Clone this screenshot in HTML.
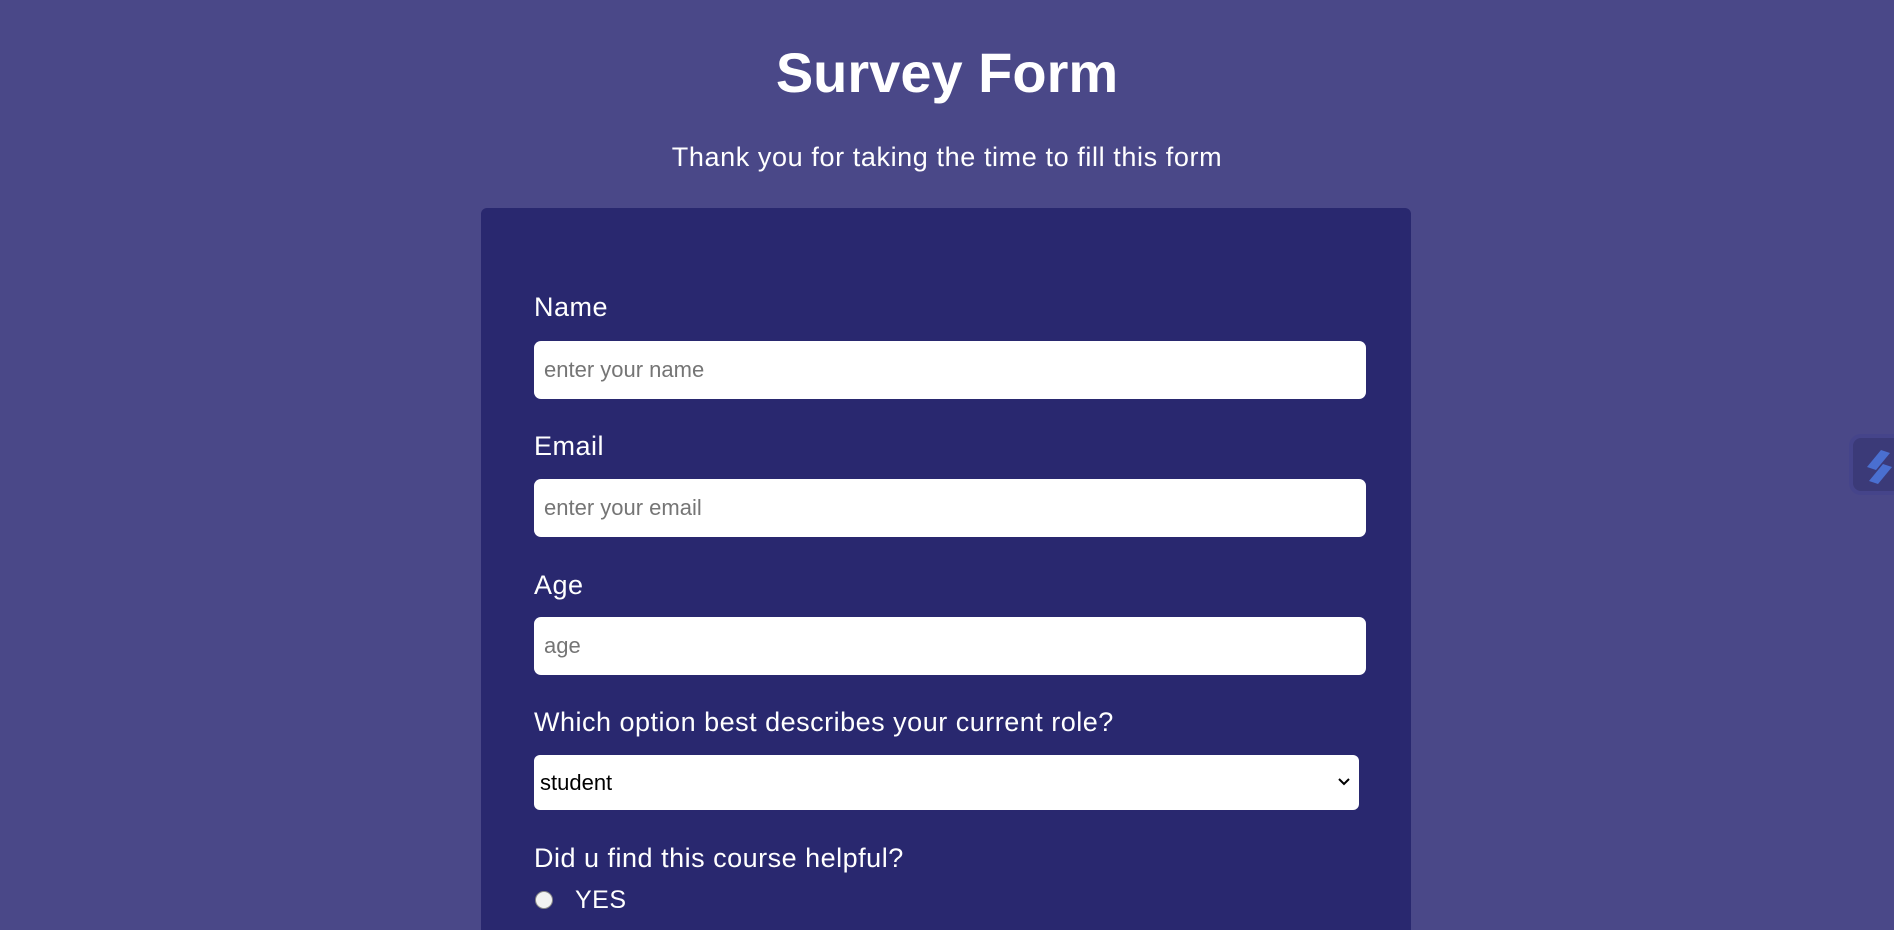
<!DOCTYPE html>
<html><head><meta charset="utf-8"><style>
*{margin:0;padding:0;box-sizing:border-box}
html,body{width:1894px;height:930px;overflow:hidden;background:#4a4888;font-family:"Comic Sans MS","Liberation Sans",sans-serif;color:#fff}
h1{position:absolute;left:0;width:1894px;text-align:center;top:38px;font-size:56px;font-weight:bold;line-height:70px}
.sub{position:absolute;left:0;width:1894px;text-align:center;top:141px;font-size:27px;letter-spacing:0.6px;line-height:32px}
.card{position:absolute;left:481px;top:208px;width:930px;height:722px;background:#29286f;border-radius:6px 6px 0 0}
.lbl{position:absolute;left:534px;font-size:27px;letter-spacing:0.5px;line-height:30px;white-space:nowrap}
.inp{position:absolute;left:534px;width:832px;height:58px;background:#fff;border-radius:7px;font-family:"Liberation Sans",Arial,sans-serif;font-size:22px;color:#757575;padding-left:10px;line-height:58px}
.sel{position:absolute;left:534px;width:825px;height:55px;background:#fff;border-radius:6px;font-family:"Liberation Sans",Arial,sans-serif;font-size:22px;color:#000;padding-left:6px;line-height:55px}
.radio{position:absolute;left:535px;top:891px;width:18px;height:18px;border-radius:50%;background:#f2f2f2;border:1px solid #888}
.widget{position:absolute;left:1849px;top:434px;width:62px;height:61px;border-radius:12px;background:#3b3a78;border:4px solid #45448a}
</style></head><body>
<h1>Survey Form</h1>
<div class="sub">Thank you for taking the time to fill this form</div>
<div class="card"></div>
<div class="lbl" style="top:292px">Name</div>
<div class="inp" style="top:341px">enter your name</div>
<div class="lbl" style="top:431px">Email</div>
<div class="inp" style="top:479px">enter your email</div>
<div class="lbl" style="top:570px">Age</div>
<div class="inp" style="top:617px">age</div>
<div class="lbl" style="top:707px">Which option best describes your current role?</div>
<div class="sel" style="top:755px">student<svg style="position:absolute;right:8px;top:22px" width="14" height="10" viewBox="0 0 14 10"><path d="M2 2l5 5 5-5" stroke="#000" stroke-width="2" fill="none"/></svg></div>
<div class="lbl" style="top:843px">Did u find this course helpful?</div>
<div class="radio"></div>
<div class="lbl" style="left:575px;top:885px;font-family:'Liberation Sans',sans-serif;font-size:25px">YES</div>
<div class="widget"><svg width="44" height="48" viewBox="0 0 44 48" style="position:absolute;left:8px;top:3px"><path d="M6 26 L20 9 L29 12 L15 29Z" fill="#4a6fd0"/><path d="M8 40 L22 23 L31 26 L17 43Z" fill="#4a6fd0"/></svg></div>
</body></html>
